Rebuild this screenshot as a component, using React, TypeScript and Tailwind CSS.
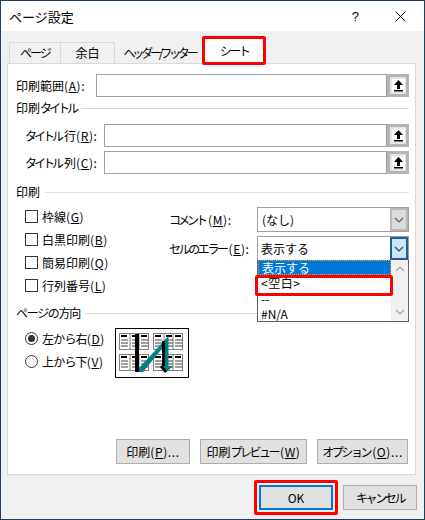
import type { ReactNode } from "react";

function UploadButton() {
  return (
    <div className="w-[22px] h-full flex items-center justify-center border-[3px] border-[#b4b4b4] bg-[#e4e4e4]">
      <div className="w-[13px] h-[13px] bg-white flex items-center justify-center">
        <svg width="11" height="13" viewBox="0 0 11 13">
          <path d="M5.5 1 L10 6 H7 V10 H4 V6 H1 Z" fill="#000" />
          <rect x="1" y="11" width="9" height="1.5" fill="#000" />
        </svg>
      </div>
    </div>
  );
}

// "(A)" part of a label, the latin runs wider than the kana
function Key({ k, tail }: { k: string; tail?: string }) {
  return (
    <span className="tracking-[0.6px]">
      (<u>{k}</u>){tail}
    </span>
  );
}

function Field({ label, hotkey, width }: { label: ReactNode; hotkey: string; width: string }) {
  return (
    <div className="flex h-[23px]">
      <div className={`${width} flex items-center shrink-0 whitespace-nowrap`}>
        {label}
        <Key k={hotkey} tail=":" />
      </div>
      <div className="flex-1 border border-[#a0a0a0] bg-white" />
      <UploadButton />
    </div>
  );
}

function GroupTitle({ children, className }: { children: ReactNode; className?: string }) {
  return (
    <div className={`flex items-center h-[18px] gap-[5px] ${className ?? ""}`}>
      <span className="whitespace-nowrap">{children}</span>
      <div className="flex-1 h-px bg-[#dcdcdc]" />
    </div>
  );
}

function Check({ label, hotkey }: { label: string; hotkey: string }) {
  return (
    <div className="flex items-center h-[23px] whitespace-nowrap">
      <div className="w-[13px] h-[13px] border border-[#333] bg-white mr-[4px]" />
      {label}
      <Key k={hotkey} />
    </div>
  );
}

function Radio({ label, hotkey, checked }: { label: string; hotkey: string; checked?: boolean }) {
  return (
    <div className="flex items-center h-[23px] whitespace-nowrap">
      <div className="w-[13px] h-[13px] rounded-full border border-[#333] bg-white mr-[4px] flex items-center justify-center">
        {checked && <div className="w-[7px] h-[7px] rounded-full bg-[#333]" />}
      </div>
      <span className="tracking-[-0.8px]">{label}</span>
      <Key k={hotkey} />
    </div>
  );
}

function Chevron({ color }: { color: string }) {
  return (
    <svg width="10" height="6" viewBox="0 0 10 6" fill="none" stroke={color} strokeWidth="1.2">
      <path d="M1 1 L5 5 L9 1" />
    </svg>
  );
}

function MiniTable({ x, y }: { x: number; y: number }) {
  const cols = [x + 1, x + 12, x + 21];
  return (
    <g>
      <rect x={x + 0.5} y={y + 0.5} width="29" height="16" fill="#fff" stroke="#808080" />
      <line x1={x + 11} y1={y} x2={x + 11} y2={y + 16} stroke="#808080" />
      <line x1={x + 20} y1={y} x2={x + 20} y2={y + 16} stroke="#808080" />
      {cols.map((c) => (
        <g key={c}>
          <rect x={c + 1} y={y + 2} width="6" height="2" fill="#000" />
          <rect x={c + 1} y={y + 6.5} width="7" height="1" fill="#404040" />
          <rect x={c + 1} y={y + 9.5} width="7" height="1" fill="#404040" />
          <rect x={c + 1} y={y + 12.5} width="7" height="1" fill="#404040" />
        </g>
      ))}
    </g>
  );
}

function PageOrderIcon() {
  return (
    <svg width="74" height="50" viewBox="0 0 74 50" className="shrink-0">
      <rect x="0.5" y="0.5" width="73" height="49" fill="#fff" stroke="#000" />
      <MiniTable x={4} y={5} />
      <MiniTable x={38} y={5} />
      <MiniTable x={4} y={26} />
      <MiniTable x={38} y={26} />
      <path d="M20 6 H24 V44 H20 Z" fill="#000" />
      <path d="M24 44 V40 L53.5 8 V38 H58 L51.5 44 L45 38 H50 V17 L28 44 Z" fill="#008080" />
      <path d="M47 13 H50 V38 H47 Z M45 39 L47 37 L52 43 L50 45 Z" fill="#000" />
    </svg>
  );
}

export default function App() {
  return (
    <div className="w-[425px] h-[520px] border border-[#1c3f5f] bg-[#f0f0f0] flex flex-col text-[12px] leading-none text-black overflow-hidden font-['Noto_Sans_CJK_JP','Noto_Sans',sans-serif]">
      <div className="h-[30px] shrink-0 bg-white flex items-center pl-[8px]">
        <span className="text-[13px]">ページ設定</span>
        <div className="ml-auto flex items-center">
          <span className="text-[13px] font-['Liberation_Sans',sans-serif] mr-[36px]">?</span>
          <svg width="11" height="11" viewBox="0 0 11 11" stroke="#000" strokeWidth="1" className="mr-[18px]">
            <path d="M0.5 0.5 L10.5 10.5 M10.5 0.5 L0.5 10.5" />
          </svg>
        </div>
      </div>

      {/* tabs */}
      <div className="flex items-end h-[25px] mt-[7px] pl-[8px] shrink-0 relative">
        <div className="w-[52px] h-[21px] border border-b-0 border-[#d9d9d9] flex items-center justify-center tracking-[-2px]">ページ</div>
        <div className="w-[54px] h-[21px] border border-l-0 border-b-0 border-[#d9d9d9] flex items-center justify-center">余白</div>
        <div className="w-[89px] h-[21px] flex items-center justify-center tracking-[-3.2px] whitespace-nowrap">ヘッダー/フッター</div>
        <div className="relative w-[60px] h-[26px] -mb-px bg-white flex items-center justify-center z-10 tracking-[-2.5px]">
          シート
          <div className="absolute -inset-x-[2px] -top-[2px] -bottom-[1px] border-[3px] border-[#ff0000] rounded-[2px]" />
        </div>
      </div>

      <div className="relative ml-[6px] w-[409px] h-[412px] shrink-0 border border-[#d9d9d9] bg-white flex flex-col pt-[10px] pl-[8px] pr-[6px]">
        <Field label="印刷範囲" hotkey="A" width="w-[80px]" />
        <GroupTitle className="mt-[2px]">
          印刷<span className="tracking-[-3px]">タイトル</span>
        </GroupTitle>
        <div className="mt-[7px] flex flex-col gap-[4px] pl-[9px]">
          <Field label={<><span className="tracking-[-3px]">タイトル</span><span className="ml-[3px]">行</span></>} hotkey="R" width="w-[79px]" />
          <Field label={<><span className="tracking-[-3px]">タイトル</span><span className="ml-[3px]">列</span></>} hotkey="C" width="w-[79px]" />
        </div>
        <GroupTitle className="mt-[9px]">印刷</GroupTitle>

        <div className="flex mt-[4px]">
          <div className="w-[153px] pl-[9px] shrink-0 flex flex-col">
            <Check label="枠線" hotkey="G" />
            <Check label="白黒印刷" hotkey="B" />
            <Check label="簡易印刷" hotkey="Q" />
            <Check label="行列番号" hotkey="L" />
          </div>
          <div className="flex-1 flex flex-col gap-[4px] pt-[2px]">
            <div className="flex h-[25px]">
              <div className="w-[88px] flex items-center whitespace-nowrap">
                <span className="tracking-[-3px]">コメント</span>
                <span className="ml-[3px]"><Key k="M" tail=":" /></span>
              </div>
              <div className="flex-1 flex border border-[#a0a0a0] bg-white">
                <div className="flex-1 flex items-center pl-[4px]">(なし)</div>
                <div className="w-[18px] bg-[#dcdcdc] border-2 border-[#b8b8b8] flex items-center justify-center">
                  <Chevron color="#606060" />
                </div>
              </div>
            </div>
            <div className="flex h-[25px]">
              <div className="w-[88px] flex items-center whitespace-nowrap">
                <span className="tracking-[-2.4px]">セルのエラー</span>
                <span className="ml-[2px]"><Key k="E" tail=":" /></span>
              </div>
              <div className="flex-1 flex border border-[#a0a0a0] bg-white">
                <div className="flex-1 flex items-center pl-[3px]">表示する</div>
                <div className="w-[18px] bg-[#cce4f7] border-2 border-[#1f5f96] flex items-center justify-center">
                  <Chevron color="#404040" />
                </div>
              </div>
            </div>
          </div>
        </div>

        <GroupTitle className="mt-[7px]">
          <span className="tracking-[-1.3px]">ページの方向</span>
        </GroupTitle>

        <div className="flex mt-[6px] pl-[9px]">
          <div className="flex flex-col w-[90px] shrink-0 -mt-px">
            <Radio label="左から右" hotkey="D" checked />
            <Radio label="上から下" hotkey="V" />
          </div>
          <PageOrderIcon />
        </div>

        <div className="mt-auto mb-[10px] mr-px flex justify-end gap-[10px]">
          <button className="w-[74px] h-[25px] bg-[#e1e1e1] border border-[#adadad]">印刷<Key k="P" tail="..." /></button>
          <button className="w-[107px] h-[25px] bg-[#e1e1e1] border border-[#adadad] whitespace-nowrap">印刷<span className="tracking-[-2.5px]">プレビュー</span><span className="ml-[2px]"><Key k="W" /></span></button>
          <button className="w-[91px] h-[25px] bg-[#e1e1e1] border border-[#adadad] whitespace-nowrap"><span className="tracking-[-2.4px]">オプション</span><span className="ml-[2px]"><Key k="O" tail="..." /></span></button>
        </div>

        {/* open dropdown list */}
        <div className="absolute left-[249px] top-[196px] w-[152px] h-[62px] border border-[#606060] border-t-0 bg-white flex">
          <div className="flex-1 flex flex-col min-w-0">
            <div className="h-[15px] bg-[#0078d7] text-white pl-[3px] flex items-center border border-dotted border-[#f0a030]">表示する</div>
            <div className="h-[16px] pl-[3px] flex items-center tracking-[0.5px]">&lt;空白&gt;</div>
            <div className="h-[15px] pl-[3px] flex items-center">--</div>
            <div className="h-[15px] pl-[3px] flex items-center">#N/A</div>
          </div>
          <div className="w-[17px] bg-[#f0f0f0] flex flex-col items-center justify-between py-[6px]">
            <div className="rotate-180"><Chevron color="#a3a3a3" /></div>
            <Chevron color="#a3a3a3" />
          </div>
        </div>
        <div className="absolute left-[247px] top-[211px] w-[138px] h-[21px] border-[3px] border-[#ff0000] rounded-[2px]" />
      </div>

      <div className="flex justify-end gap-[10px] pr-[7px] mt-[10px]">
        <div className="relative">
          <button className="w-[74px] h-[25px] bg-[#e1e1e1] border-2 border-[#0078d7] block">OK</button>
          <div className="absolute -inset-[5px] border-[3px] border-[#ff0000] rounded-[2px]" />
        </div>
        <button className="w-[74px] h-[25px] bg-[#e1e1e1] border border-[#adadad] tracking-[-2.4px]">キャンセル</button>
      </div>
    </div>
  );
}
